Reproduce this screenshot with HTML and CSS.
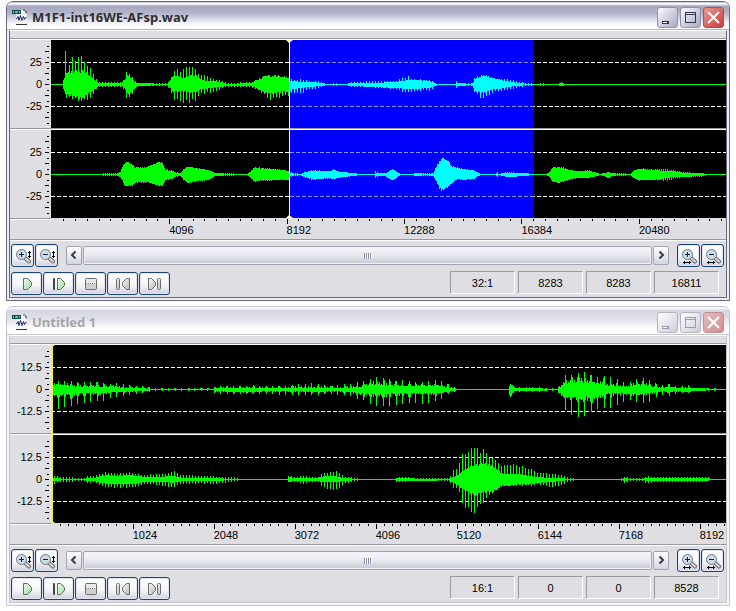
FILE: index.html
```html
<!DOCTYPE html>
<html lang="en">
<head>
    <meta charset="UTF-8">
    <meta name="viewport" content="width=device-width, initial-scale=1.0">
    <title>Wave Editor</title>
    <link rel="stylesheet" href="styles.css">
</head>
<body>
    <!-- shared icons -->
    <svg class="sprites" width="0" height="0" aria-hidden="true">
        <defs>
            <linearGradient id="green" x1="0" y1="0" x2="1" y2="1">
                <stop offset="0" stop-color="#eefbee"/><stop offset="1" stop-color="#9fdba4"/>
            </linearGradient>
            <linearGradient id="gray" x1="0" y1="0" x2="1" y2="1">
                <stop offset="0" stop-color="#fafafa"/><stop offset="1" stop-color="#b4b8b4"/>
            </linearGradient>
        </defs>
        <symbol id="i-file" viewBox="0 0 16 17">
            <path d="M4 1h8l3 3v12H4z" fill="#f4f4f6"/>
            <path d="M11 1h2M13 2h1v2h1" stroke="#444" fill="none"/>
            <path d="M4 15.500h11" stroke="#333"/>
            <path d="M0 1h9v4H0z" fill="#0c5040"/>
            <path d="M1.500 2v2M3.500 2.500h2v1h-2zM7.500 2v2" stroke="#7fbfae" fill="none"/>
            <path d="M4 9.500h1l1-2 1 4 1.500-5 1.500 5 1.500-4 1 3 1-2h1" stroke="#1a237e" fill="none"/>
        </symbol>
        <symbol id="i-lens" viewBox="0 0 23 23">
            <path d="M14 14l4 3.500" stroke="#666" stroke-width="4" stroke-linecap="round"/>
            <path d="M14 14l4 3.500" stroke="#ddd" stroke-width="2" stroke-linecap="round"/>
            <circle cx="10.500" cy="10.500" r="5" fill="#c9dcec" stroke="#777"/>
            <path d="M8 10.500h5" stroke="#123"/>
        </symbol>
        <symbol id="i-vert" viewBox="0 0 23 23">
            <path d="M18.500 7v7M17 8.500h3M17 12.500h3" stroke="#000" fill="none"/>
        </symbol>
        <symbol id="i-horz" viewBox="0 0 23 23">
            <path d="M6 18.500h8M7.500 17v3M12.500 17v3" stroke="#000" fill="none"/>
        </symbol>
        <symbol id="i-play" viewBox="0 0 31 23">
            <path d="M12.500 6.500h4l4 4v3l-4 4h-4z" fill="url(#green)" stroke="#58705c"/>
        </symbol>
        <symbol id="i-step" viewBox="0 0 31 23">
            <path d="M10.500 6.500h1v11h-1z" fill="#555" stroke="#444"/>
            <path d="M14.500 6.500h3l4 4v3l-4 4h-3z" fill="url(#green)" stroke="#58705c"/>
        </symbol>
        <symbol id="i-stop" viewBox="0 0 31 23">
            <rect x="10.500" y="6.500" width="11" height="11" rx="1" fill="#e9e9e9" stroke="#6b6b6b"/>
            <path d="M11 12h10v5H11z" fill="#cfd1cf"/>
            <path d="M11 11.500h10" stroke="#8a8a8a" stroke-dasharray="1 1"/>
        </symbol>
        <symbol id="i-prev" viewBox="0 0 31 23">
            <rect x="9.500" y="6.500" width="3" height="11" rx="1" fill="url(#gray)" stroke="#6b6b6b"/>
            <path d="M22.500 6.500h-3l-4 4v3l4 4h3z" fill="url(#gray)" stroke="#6b6b6b"/>
        </symbol>
        <symbol id="i-next" viewBox="0 0 31 23">
            <path d="M9.500 6.500h3l4 4v3l-4 4h-3z" fill="url(#gray)" stroke="#6b6b6b"/>
            <rect x="18.500" y="6.500" width="3" height="11" rx="1" fill="url(#gray)" stroke="#6b6b6b"/>
        </symbol>
        <symbol id="i-left" viewBox="0 0 16 19">
            <path d="M9.500 5.500l-3.500 3.500 3.500 3.500" stroke="#3c3c44" stroke-width="2" fill="none"/>
        </symbol>
        <symbol id="i-right" viewBox="0 0 16 19">
            <path d="M6.500 5.500l3.500 3.500-3.500 3.500" stroke="#3c3c44" stroke-width="2" fill="none"/>
        </symbol>
        <symbol id="i-min" viewBox="0 0 21 21">
            <path d="M5 14h7v3H5z" fill="currentColor"/><path d="M6 15h4v1H6z" fill="#fff"/>
        </symbol>
        <symbol id="i-max" viewBox="0 0 21 21">
            <rect x="5.500" y="5.500" width="10" height="10" fill="none" stroke="currentColor"/>
            <path d="M6 7.500h9" stroke="currentColor"/>
        </symbol>
        <symbol id="i-close" viewBox="0 0 21 21">
            <path d="M5 5l11 11M16 5L5 16" stroke="#fff" stroke-width="2"/>
        </symbol>
    </svg>

    <section class="window active">
        <header class="titlebar">
            <svg class="file-icon"><use href="#i-file"/></svg>
            <h1 class="title">M1F1-int16WE-AFsp.wav</h1>
            <button class="caption-btn" aria-label="Minimize"><svg><use href="#i-min"/></svg></button>
            <button class="caption-btn" aria-label="Maximize"><svg><use href="#i-max"/></svg></button>
            <button class="caption-btn close" aria-label="Close"><svg><use href="#i-close"/></svg></button>
        </header>
        <div class="client">
            <div class="wave">
                <div class="track">
                    <div class="axis"><div class="axis-labels"><span>25</span><span>0</span><span>-25</span></div><svg class="axis-ticks"></svg></div>
                    <svg class="plot" data-wave="a" data-sel="239,483"></svg>
                </div>
                <div class="track">
                    <div class="axis"><div class="axis-labels"><span>25</span><span>0</span><span>-25</span></div><svg class="axis-ticks"></svg></div>
                    <svg class="plot" data-wave="b" data-sel="239,483"></svg>
                </div>
                <div class="cursor-lane"><div class="cursor" style="left: 35.26%"></div></div>
            </div>
            <div class="ruler-row">
                <div class="corner"></div>
                <svg class="ruler" data-step="4096" data-size="17.4" data-count="5"></svg>
            </div>
            <div class="controls">
                <div class="scroll-row">
                    <button class="tool small" aria-label="Zoom in vertically"><svg><use href="#i-lens"/><path d="M10.500 8v5" stroke="#123"/><use href="#i-vert"/></svg></button>
                    <button class="tool small" aria-label="Zoom out vertically"><svg><use href="#i-lens"/><use href="#i-vert"/></svg></button>
                    <div class="scrollbar">
                        <button class="arrow" aria-label="Scroll left"><svg><use href="#i-left"/></svg></button>
                        <div class="thumb"><span class="grip"></span></div>
                        <button class="arrow" aria-label="Scroll right"><svg><use href="#i-right"/></svg></button>
                    </div>
                    <button class="tool small" aria-label="Zoom in horizontally"><svg><use href="#i-lens"/><path d="M10.500 8v5" stroke="#123"/><use href="#i-horz"/></svg></button>
                    <button class="tool small" aria-label="Zoom out horizontally"><svg><use href="#i-lens"/><use href="#i-horz"/></svg></button>
                </div>
                <div class="play-row">
                    <div class="transport">
                        <button class="tool" aria-label="Play"><svg><use href="#i-play"/></svg></button>
                        <button class="tool" aria-label="Play from cursor"><svg><use href="#i-step"/></svg></button>
                        <button class="tool" aria-label="Stop"><svg><use href="#i-stop"/></svg></button>
                        <button class="tool" aria-label="Go to start"><svg><use href="#i-prev"/></svg></button>
                        <button class="tool" aria-label="Go to end"><svg><use href="#i-next"/></svg></button>
                    </div>
                    <div class="status"><span>32:1</span><span>8283</span><span>8283</span><span>16811</span></div>
                </div>
            </div>
        </div>
    </section>

    <section class="window">
        <header class="titlebar">
            <svg class="file-icon"><use href="#i-file"/></svg>
            <h1 class="title">Untitled 1</h1>
            <button class="caption-btn" aria-label="Minimize"><svg><use href="#i-min"/></svg></button>
            <button class="caption-btn" aria-label="Maximize"><svg><use href="#i-max"/></svg></button>
            <button class="caption-btn close" aria-label="Close"><svg><use href="#i-close"/></svg></button>
        </header>
        <div class="client">
            <div class="wave">
                <div class="track">
                    <div class="axis"><div class="axis-labels"><span>12.5</span><span>0</span><span>-12.5</span></div><svg class="axis-ticks"></svg></div>
                    <svg class="plot" data-wave="c"></svg>
                </div>
                <div class="track">
                    <div class="axis"><div class="axis-labels"><span>12.5</span><span>0</span><span>-12.5</span></div><svg class="axis-ticks"></svg></div>
                    <svg class="plot" data-wave="d"></svg>
                </div>
                <div class="cursor-lane"><div class="cursor start"></div></div>
            </div>
            <div class="ruler-row">
                <div class="corner"></div>
                <svg class="ruler" data-step="1024" data-size="12" data-count="8"></svg>
            </div>
            <div class="controls">
                <div class="scroll-row">
                    <button class="tool small" aria-label="Zoom in vertically"><svg><use href="#i-lens"/><path d="M10.500 8v5" stroke="#123"/><use href="#i-vert"/></svg></button>
                    <button class="tool small" aria-label="Zoom out vertically"><svg><use href="#i-lens"/><use href="#i-vert"/></svg></button>
                    <div class="scrollbar">
                        <button class="arrow" aria-label="Scroll left"><svg><use href="#i-left"/></svg></button>
                        <div class="thumb"><span class="grip"></span></div>
                        <button class="arrow" aria-label="Scroll right"><svg><use href="#i-right"/></svg></button>
                    </div>
                    <button class="tool small" aria-label="Zoom in horizontally"><svg><use href="#i-lens"/><path d="M10.500 8v5" stroke="#123"/><use href="#i-horz"/></svg></button>
                    <button class="tool small" aria-label="Zoom out horizontally"><svg><use href="#i-lens"/><use href="#i-horz"/></svg></button>
                </div>
                <div class="play-row">
                    <div class="transport">
                        <button class="tool" aria-label="Play"><svg><use href="#i-play"/></svg></button>
                        <button class="tool" aria-label="Play from cursor"><svg><use href="#i-step"/></svg></button>
                        <button class="tool" aria-label="Stop"><svg><use href="#i-stop"/></svg></button>
                        <button class="tool" aria-label="Go to start"><svg><use href="#i-prev"/></svg></button>
                        <button class="tool" aria-label="Go to end"><svg><use href="#i-next"/></svg></button>
                    </div>
                    <div class="status"><span>16:1</span><span>0</span><span>0</span><span>8528</span></div>
                </div>
            </div>
        </div>
    </section>

    <script src="script.js"></script>
</body>
</html>
```

FILE: styles.css
```css
* {
    box-sizing: border-box;
}
body {
    margin: 0;
    padding: 1px 6px;
    display: flex;
    flex-direction: column;
    gap: 5px;
    background: #fff;
    color: #000;
    font-family: "Liberation Sans", Arial, sans-serif;
    font-size: 11px;
}
svg {
    display: block;
}
button {
    padding: 0;
    font: inherit;
}
.sprites {
    position: absolute;
}

/* window frame */
.window {
    border: 1px solid #c4c4d0;
    border-radius: 7px 7px 0 0;
    padding: 0 2px 2px;
    background: #f6f6fa;
    overflow: hidden;
}
.window.active {
    border-color: #696680;
    background: #ececf4;
}
.titlebar {
    display: flex;
    align-items: center;
    gap: 2px;
    height: 28px;
    margin: 0 -2px;
    padding: 3px 5px 0;
    border-bottom: 1px solid #c6c6ce;
    background: linear-gradient(#f4f4f8 0, #fafafc 2px, #d6d6e2 3px, #dedee8 11px, #fff 22px, #fff);
}
.active .titlebar {
    border-bottom-color: #b4b4bc;
    background: linear-gradient(#9a9aa8 0, #fff 1px, #fff 2px, #a6a6c0 4px, #b4b4ca 11px, #f8f8fc 22px, #fff);
}
.file-icon {
    width: 16px;
    height: 17px;
}
.title {
    flex: 1;
    margin: 0 0 0 2px;
    font-family: "Noto Sans", "Open Sans", sans-serif;
    font-size: 13px;
    line-height: 18px;
    font-weight: bold;
    color: #a4a4a8;
    white-space: nowrap;
}
.active .title {
    color: #2e2e34;
}
.caption-btn {
    width: 21px;
    height: 21px;
    border: 1px solid #b4b4c4;
    border-radius: 3px;
    background: linear-gradient(135deg, #fff, #cdcddb);
    color: #9c9cac;
}
.active .caption-btn {
    border-color: #9090a6;
    background: linear-gradient(135deg, #fafaff, #a8a8c4);
    color: #34344a;
}
.caption-btn svg {
    width: 21px;
    height: 21px;
    margin: -1px;
}
.caption-btn.close {
    border-color: #c09090;
    background: linear-gradient(135deg, #e6bcbc, #d08e8e);
}
.active .caption-btn.close {
    border-color: #a85050;
    background: linear-gradient(135deg, #eb9a94, #c83c3c);
}
.client {
    border: 1px solid #c4c4cc;
    border-top-color: #fff;
    padding-top: 7px;
    background: #dfdfe3;
}
.active .client {
    border-color: #fff #696680 #696680;
}

/* wave display */
.wave {
    position: relative;
}
.track {
    display: grid;
    grid-template-columns: 41px 1fr;
    border-top: 1px solid #9a9a9e;
    padding-top: 1px;
    box-shadow: inset 0 1px #fff;
}
.axis {
    display: flex;
    padding-right: 2px;
}
.axis-labels {
    flex: 1;
    display: flex;
    flex-direction: column;
    justify-content: center;
    padding-right: 2px;
    line-height: 22px;
    text-align: right;
}
.axis-ticks {
    width: 5px;
    height: 88px;
}
.plot {
    width: 100%;
    height: 88px;
    background: #000;
}
.cursor-lane {
    position: absolute;
    top: 2px;
    right: 0;
    bottom: 0;
    left: 41px;
    overflow: hidden;
}
.cursor {
    position: absolute;
    top: 0;
    bottom: 0;
    width: 1px;
    background: #fff;
}
.cursor::before,
.cursor::after {
    content: "";
    position: absolute;
    left: -3px;
    border: 3px solid transparent;
    border-right-width: 4px;
}
.cursor::before {
    top: 0;
    border-top-color: #ffffb0;
    border-bottom: 0;
}
.cursor::after {
    bottom: 0;
    border-bottom-color: #ffffb0;
    border-top: 0;
}
.cursor.start {
    left: 0;
    width: 2px;
    background: #f6f03c;
}
.cursor.start::before {
    border-top-color: #f6f03c;
}
.cursor.start::after {
    border-bottom-color: #f6f03c;
}
.ruler-row {
    display: grid;
    grid-template-columns: 41px 1fr;
    border-bottom: 1px solid #9a9a9e;
}
.corner {
    border-top: 1px solid #9a9a9e;
    box-shadow: inset 0 1px #fff;
}
.ruler {
    width: 100%;
    height: 21px;
}

/* scroll bar, transport buttons, status fields */
.controls {
    display: flex;
    flex-direction: column;
    gap: 4px;
    border-top: 1px solid #fff;
    padding: 3px 1px 2px;
}
.scroll-row {
    display: flex;
    align-items: center;
    gap: 1px;
    padding-right: 1px;
}
.tool {
    width: 31px;
    height: 23px;
    border: 1px solid #1c4470;
    border-radius: 3px;
    background: linear-gradient(#fff, #f4f4f8 60%, #cfcfe0);
    box-shadow: inset 0 0 0 1px #dfe6f2;
}
.tool.small {
    width: 23px;
}
.tool svg {
    width: 31px;
    height: 23px;
    margin: -1px;
}
.tool.small svg {
    width: 23px;
}
.scrollbar {
    flex: 1;
    display: flex;
    gap: 1px;
    height: 19px;
    margin: 0 7px;
}
.arrow {
    width: 16px;
    height: 19px;
    border: 1px solid #a2a2b0;
    border-radius: 2px;
    background: linear-gradient(#fff, #d4d4e2);
}
.arrow svg {
    width: 16px;
    height: 19px;
    margin: -1px;
}
.thumb {
    flex: 1;
    display: flex;
    align-items: center;
    justify-content: center;
    border: 1px solid #a2a2b0;
    border-radius: 2px;
    background: linear-gradient(#f6f6fa, #e8e8f0 50%, #c6c6d6);
    box-shadow: inset 0 0 0 1px #f0f0f6;
}
.grip {
    width: 8px;
    height: 6px;
    background: repeating-linear-gradient(90deg, #8c8ca0 0 1px, #fff 1px 2px);
}
.play-row {
    display: flex;
    justify-content: space-between;
    align-items: flex-start;
}
.transport {
    display: flex;
    gap: 1px;
    padding-top: 1px;
}
.status {
    display: flex;
    gap: 3px;
    padding-right: 6px;
}
.status span {
    width: 65px;
    height: 23px;
    border: 1px solid;
    border-color: #9a9a9e #fff #fff #9a9a9e;
    line-height: 22px;
    text-align: center;
}
```

FILE: script.js
```js
// envelope points: x, body up, body down, peak up, peak down
const waves = {
    a: { period: 3, noise: 0.25, points: [
        [0,0,0,0,0],[11,0,0,0,0],[12,3,3,5,5],[13,6,6,12,14],[14,38,9,38,16],[15,11,9,13,14],[18,11,10,22,14],[19,11,10,30,14],[24,13,12,30,16],[32,13,13,29,18],[36,10,9,20,16],[40,7,7,16,16],[44,3,4,6,7],[47,1,1,2,2],
        [70,1,1,2,2],[72,2,2,4,5],[74,5,5,13,13],[76,9,8,12,18],[80,6,8,9,14],[84,1,2,3,3],[86,1,1,1,1],[116,0,0,1,1],[119,4,3,6,6],[122,8,7,12,14],[125,8,7,16,17],[132,6,6,17,19],
        [138,8,7,18,19],[145,8,7,15,16],[150,4,4,11,10],[160,3,3,6,8],[168,2,2,5,6],[175,0,1,1,2],[199,1,1,2,2],[204,3,3,4,4],[214,9,8,9,12],[219,8,8,9,16],[229,8,7,9,14],[238,6,6,6,11],
        [239,3,5,5,11],[249,2,3,5,9],[259,2,2,3,5],[269,1,1,3,3],[275,0,0,0,0],[282,0,0,1,1],[296,0,0,0,0],[299,1,1,2,2],[324,1,2,4,3],[342,2,3,3,4],[350,3,3,6,7],[357,4,4,8,9],
        [366,4,4,5,7],[379,3,3,5,6],[384,1,1,1,1],[386,0,0,0,0],[403,0,0,0,0],[406,1,1,5,5],[408,1,1,1,1],[420,0,0,1,1],[424,5,6,8,9],[429,8,8,9,14],[435,8,7,9,13],[442,6,4,6,8],
        [449,4,4,6,7],[456,3,2,5,6],[466,1,1,3,3],[479,0,0,1,1],[482,0,0,0,0],[490,0,0,1,1],[498,0,0,0,0],[507,0,0,0,0],[508,1,1,3,2],[512,1,1,1,1],[514,0,0,0,0],[675,0,0,0,0]
    ] },
    b: { period: 2, noise: 0.12, points: [
        [0,0,0,0,0],[50,0,0,0,0],[52,0,0,1,1],[64,0,0,1,1],[69,2,2,2,2],[71,7,5,8,6],[73,10,10,12,11],[76,13,11,13,12],[81,9,11,10,11],[84,7,7,7,8],[95,7,7,7,8],[101,9,9,10,9],[107,12,11,13,12],
        [111,11,10,12,12],[114,4,5,5,5],[120,3,4,4,4],[125,1,1,2,2],[129,1,1,1,1],[133,5,5,6,6],[136,7,8,7,8],[149,5,6,6,6],[157,4,5,4,5],[164,1,1,1,1],[182,0,0,1,1],[184,0,0,0,0],[196,0,0,0,0],
        [199,2,2,4,4],[203,6,6,7,7],[219,5,5,6,6],[229,4,5,5,5],[238,3,5,3,5],[239,1,1,2,2],[247,0,0,1,1],[249,0,0,0,0],[254,2,2,2,3],[261,3,4,4,5],[279,3,3,3,4],[282,4,4,5,4],[289,2,2,2,3],
        [305,1,1,1,1],[307,0,0,0,0],[322,0,0,0,0],[324,1,1,3,3],[327,1,1,1,1],[334,1,1,1,1],[337,2,3,3,4],[341,5,5,5,6],[346,2,2,2,2],[349,0,0,0,0],[361,0,0,0,0],[363,1,1,1,1],[376,0,0,1,1],
        [382,1,1,1,1],[385,7,6,8,7],[389,14,14,16,17],[392,16,15,17,16],[396,14,12,14,13],[401,7,8,8,8],[406,6,4,7,4],[412,5,5,6,5],[422,4,4,4,4],[427,1,1,1,1],[430,0,0,0,0],[444,0,0,0,0],
        [446,1,1,2,2],[448,0,0,0,0],[451,1,1,1,1],[455,1,2,2,2],[476,1,1,1,1],[479,0,0,0,0],[494,0,0,0,0],[498,1,1,2,2],[501,6,6,7,7],[507,7,8,8,9],[512,6,6,7,7],[519,4,4,4,5],[529,3,3,3,3],
        [537,3,3,4,3],[546,1,1,1,1],[549,0,0,0,0],[553,1,1,1,1],[557,2,3,3,4],[560,1,1,1,1],[570,0,0,1,1],[579,0,0,0,0],[582,3,3,3,3],[587,5,5,6,6],[602,4,5,5,5],[616,3,3,5,6],[622,3,2,4,4],
        [632,1,2,2,2],[649,1,1,1,2],[656,0,0,0,0],[675,0,0,0,0]
    ] },
    c: { period: 6.5, noise: 0.4, points: [
        [0,4,4,10,9],[6,4,5,10,19],[14,4,4,9,17],[21,3,4,8,16],[29,2,3,9,13],[37,2,3,8,12],[44,2,3,7,11],[52,2,3,7,11],[61,2,2,6,7],[71,1,2,6,6],[82,1,1,4,4],[92,1,1,3,3],[99,0,0,2,2],
        [102,0,0,1,1],[162,0,0,1,1],[164,1,1,3,4],[182,1,2,3,4],[199,1,2,4,4],[219,1,1,3,4],[229,1,1,3,5],[249,1,1,6,5],[266,1,2,6,5],[279,1,1,4,4],[299,1,2,6,6],[307,2,3,8,9],[314,3,4,10,11],
        [321,4,4,12,15],[327,5,5,13,16],[334,3,4,12,16],[346,3,3,10,15],[359,3,3,8,13],[372,3,3,8,14],[386,3,3,9,11],[392,2,3,9,8],[399,1,1,4,3],[406,0,0,1,1],[408,0,0,0,0],[457,0,0,0,0],
        [459,5,8,8,11],[462,1,1,3,3],[472,1,1,2,2],[486,1,1,2,2],[499,0,0,1,1],[506,0,0,1,1],[508,2,3,4,4],[512,5,6,13,18],[518,6,7,18,25],[524,6,7,15,26],[531,7,8,18,28],[537,6,7,15,23],
        [544,6,7,15,20],[551,5,5,14,18],[556,3,4,12,19],[562,3,3,12,16],[569,2,3,9,15],[576,2,3,7,8],[582,3,4,9,12],[589,4,4,12,12],[596,3,3,10,14],[602,2,2,7,8],[612,1,1,4,5],[616,2,2,6,7],
        [626,1,1,3,3],[637,1,2,4,3],[642,1,1,1,1],[666,0,0,1,1],[668,0,0,0,0],[675,0,0,0,0]
    ] },
    d: { period: 3, noise: 0.2, points: [
        [0,1,1,3,6],[4,1,1,3,3],[16,0,0,2,2],[34,0,0,1,1],[36,1,1,3,3],[44,1,1,4,3],[49,3,3,6,6],[56,4,4,7,8],[64,3,4,6,8],[79,4,4,7,9],[89,3,3,5,7],[92,2,2,4,4],[112,2,2,6,6],[122,3,3,8,8],
        [131,1,1,4,4],[162,1,1,3,4],[182,0,0,2,2],[189,0,0,0,0],[236,0,0,0,0],[238,2,2,6,5],[241,1,1,2,2],[254,1,1,4,4],[258,1,1,2,2],[267,1,1,2,2],[272,3,2,7,9],[281,3,2,8,11],[287,2,2,8,11],
        [292,1,1,3,4],[306,0,0,1,1],[308,0,0,0,0],[344,0,0,0,0],[346,1,1,3,4],[349,1,1,2,2],[376,0,1,1,1],[396,0,0,1,1],[399,1,1,3,3],[402,2,3,9,9],[407,4,5,14,8],[411,8,9,26,28],[419,13,13,32,33],
        [424,13,15,34,35],[429,15,13,33,26],[434,15,12,28,21],[439,14,12,25,15],[447,9,9,18,10],[449,6,6,15,7],[464,5,5,15,7],[479,3,4,12,6],[486,2,3,8,5],[499,1,2,6,8],[509,1,1,5,6],[516,0,0,2,2],
        [526,0,0,0,0],[569,0,0,0,0],[574,1,1,3,4],[578,0,0,1,1],[591,0,0,1,1],[595,1,1,3,4],[606,1,1,2,2],[650,1,1,2,2],[656,1,1,3,2],[660,0,0,0,0],[675,0,0,0,0]
    ] }
};

const WIDTH = 675;
const MIDDLE = 44;

// interpolated envelope at column x
function envelope(points, x) {
    let i = 1;
    while (i < points.length - 1 && points[i][0] < x) i++;
    const a = points[i - 1];
    const b = points[i];
    const t = (x - a[0]) / (b[0] - a[0]);
    return [1, 2, 3, 4].map(k => a[k] + (b[k] - a[k]) * t);
}

// repeatable noise, 0..1
function noise(n) {
    const v = Math.sin(n * 127.1 + 11.7) * 43758.5453;
    return v - Math.floor(v);
}

function columns(wave, from, to) {
    let d = '';
    for (let x = from; x < to; x++) {
        const e = envelope(wave.points, x);
        const phase = Math.floor(x % wave.period);
        const up1 = 1 - wave.noise * noise(x);
        const down1 = 1 - wave.noise * noise(x + 900);
        let up = e[0] * (up1 + wave.noise / 2);
        let down = e[1] * (down1 + wave.noise / 2);
        if (phase === 0) {
            up = e[2] * (wave.period > 4 ? 1 - noise(x) * 0.2 : up1);
            down = e[3] * (wave.period > 4 ? 1 : down1);
        } else if (wave.period > 4) {
            // long periods get an uneven ripple between the peaks
            up += (e[2] - e[0]) * [0, 0.4, 0.1, 0.3, 0, 0.1, 0.6][phase] * noise(x + 50) * 1.5;
            down += (e[3] - e[1]) * [0, 0.3, 0, 0.2, 0, 0.1, 0.3][phase] * noise(x + 70) * 1.5;
        }
        d += `M${x + 0.5} ${MIDDLE - Math.round(up)}V${MIDDLE + 1 + Math.round(down)}`;
    }
    return d;
}

document.querySelectorAll('.plot').forEach(plot => {
    const wave = waves[plot.dataset.wave];
    const sel = plot.dataset.sel ? plot.dataset.sel.split(',').map(Number) : [0, 0];
    plot.setAttribute('viewBox', `0 0 ${WIDTH} 88`);
    plot.setAttribute('preserveAspectRatio', 'none');
    const dashes = (from, to, color) =>
        `<path d="M${from} 22.5H${to}M${from} 66.5H${to}" stroke="${color}" stroke-dasharray="4 2"/>`;
    plot.innerHTML = `<g shape-rendering="crispEdges" fill="none">
        <rect x="${sel[0]}" width="${sel[1] - sel[0]}" height="88" fill="#0000ff"/>
        ${dashes(0, WIDTH, '#fff')}
        ${sel[1] ? `<path d="M${sel[0]} 22.5H${sel[1]}M${sel[0]} 66.5H${sel[1]}" stroke="#00f"/>` : ''}
        ${sel[1] ? dashes(sel[0], sel[1], '#8c8cff') : ''}
        <path d="${columns(wave, 0, sel[0])}${columns(wave, sel[1], WIDTH)}" stroke="#00ff00"/>
        <path d="${columns(wave, sel[0], sel[1])}" stroke="#00ffff"/>
    </g>`;
});

document.querySelectorAll('.axis-ticks').forEach(svg => {
    let d = '';
    for (let k = -7; k <= 7; k++) {
        const y = Math.round(MIDDLE + k * 5.5) + 0.5;
        d += `M${k % 2 ? 3 : 1} ${y}H5`;
    }
    svg.innerHTML = `<path d="${d}" stroke="#000" shape-rendering="crispEdges"/>`;
});

document.querySelectorAll('.ruler').forEach(svg => {
    const size = Number(svg.dataset.size);
    const count = Number(svg.dataset.count);
    let html = '';
    for (let i = 1; i <= count * 10 + 9; i++) {
        const x = i * size / 10 + 0.1;
        if (x > 100) break;
        const major = i % 10 === 0;
        html += `<rect x="${x}%" y="1" width="1" height="${major ? 5 : 2}" shape-rendering="crispEdges"/>`;
        if (major) {
            html += `<text x="${x}%" y="16">${i / 10 * svg.dataset.step}</text>`;
        }
    }
    svg.innerHTML = html;
});
```
